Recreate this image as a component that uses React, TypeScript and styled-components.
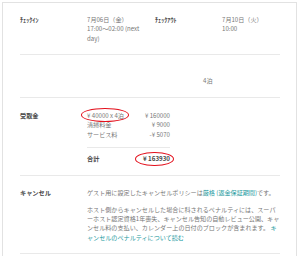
import React from "react";
import styled, { createGlobalStyle } from "styled-components";

const colors = {
  label: "#484848",
  value: "#767676",
  line: "#e9e9e9",
  border: "#e2e2e2",
  link: "#1d9aa0",
  red: "#e3101c",
};

const GlobalStyle = createGlobalStyle`
  html, body {
    margin: 0;
    padding: 0;
    background: #ffffff;
  }
  body {
    font-family: "Noto Sans CJK JP", "Noto Sans", sans-serif;
    -webkit-font-smoothing: antialiased;
  }
`;

const App: React.FC = () => {
  return (
    <>
      <GlobalStyle />
      <Card>
        <Section $pt={11.5} $pb={10}>
          <FieldGrid $cols="67px 68px 67px 1fr">
            <Label>ﾁｪｯｸｲﾝ</Label>
            <Value>
              7月06日（金）
              <br />
              17:00〜02:00 (next
              <br />
              day)
            </Value>
            <Label>ﾁｪｯｸｱｳﾄ</Label>
            <Value>
              7月10日（火）
              <br />
              10:00
            </Value>
          </FieldGrid>
        </Section>

        <Section $pt={21} $pb={11}>
          <Nights>4泊</Nights>
        </Section>

        <Section $pt={13} $pb={11.5}>
          <FieldGrid $cols="67px 1fr">
            <Label>受取金</Label>
            <Breakdown>
              <Lines>
                <span>
                  <Circled $l={6} $r={5}>¥ 40000 x 4泊</Circled>
                </span>
                <Amount>¥ 160000</Amount>
                <span>清掃料金</span>
                <Amount>¥ 9000</Amount>
                <span>サービス料</span>
                <Amount>-¥ 5070</Amount>
              </Lines>
              <Total>
                <span>合計</span>
                <Circled $l={8} $r={4}>¥ 163930</Circled>
              </Total>
            </Breakdown>
          </FieldGrid>
        </Section>

        <Section $pt={12} $pb={11.7}>
          <FieldGrid $cols="67px 1fr">
            <Label>キャンセル</Label>
            <div>
              <Policy>
                ゲスト用に設定したキャンセルポリシーは
                <Link href="#">厳格 (返金保証期間)</Link>
                です。
              </Policy>
              <Penalty>
                ホスト側からキャンセルした場合に科されるペナルティには、スーパ
                <br />
                ーホスト認定資格1年喪失、キャンセル告知の自動レビュー公開、キャ
                <br />
                ンセル料の支払い、カレンダー上の日付のブロックが含まれます。{" "}
                <Link href="#">
                  キ
                  <br />
                  ャンセルのペナルティについて読む
                </Link>
              </Penalty>
            </div>
          </FieldGrid>
        </Section>
      </Card>
    </>
  );
};

export default App;

const Card = styled.div`
  box-sizing: border-box;
  margin: 2px 0 0 2px;
  width: 295px;
  min-height: 300px;
  border: 1px solid ${colors.border};
  padding: 0 16px 0 17px;
`;

const Section = styled.section<{ $pt: number; $pb: number }>`
  padding: ${({ $pt }) => $pt}px 0 ${({ $pb }) => $pb}px;
  border-bottom: 1px solid ${colors.line};
`;

const FieldGrid = styled.div<{ $cols: string }>`
  display: grid;
  grid-template-columns: ${({ $cols }) => $cols};
  align-items: start;
`;

const Label = styled.div`
  font-size: 6.2px;
  line-height: 9.8px;
  font-weight: 700;
  color: ${colors.label};
  white-space: nowrap;
`;

const Value = styled.div`
  font-size: 6.1px;
  line-height: 9.8px;
  color: ${colors.value};
  white-space: nowrap;
`;

const Nights = styled.div`
  padding-left: 183px;
  font-size: 6.1px;
  line-height: 9.8px;
  color: ${colors.value};
`;

const Breakdown = styled.div`
  width: 83px;
`;

const Lines = styled.div`
  display: grid;
  grid-template-columns: 1fr auto;
  font-size: 6.1px;
  line-height: 9.5px;
  color: ${colors.value};
  white-space: nowrap;
`;

const Amount = styled.span`
  text-align: right;
`;

const Total = styled.div`
  display: flex;
  justify-content: space-between;
  margin-top: 7.5px;
  padding-top: 6.5px;
  border-top: 1px solid ${colors.line};
  font-size: 6.2px;
  line-height: 9.8px;
  font-weight: 700;
  color: ${colors.label};
`;

const Circled = styled.span<{ $l: number; $r: number }>`
  position: relative;
  white-space: nowrap;

  &::after {
    content: "";
    position: absolute;
    left: -${({ $l }) => $l}px;
    right: -${({ $r }) => $r}px;
    top: -2.5px;
    bottom: -2px;
    border: 1.6px solid ${colors.red};
    border-radius: 50%;
  }
`;

const Policy = styled.p`
  margin: 0;
  font-size: 6.1px;
  line-height: 9.5px;
  color: ${colors.value};
  white-space: nowrap;
`;

const Penalty = styled.p`
  margin: 7px 0 0;
  font-size: 6.1px;
  line-height: 9.2px;
  color: ${colors.value};
  white-space: nowrap;
`;

const Link = styled.a`
  color: ${colors.link};
  text-decoration: none;
`;
